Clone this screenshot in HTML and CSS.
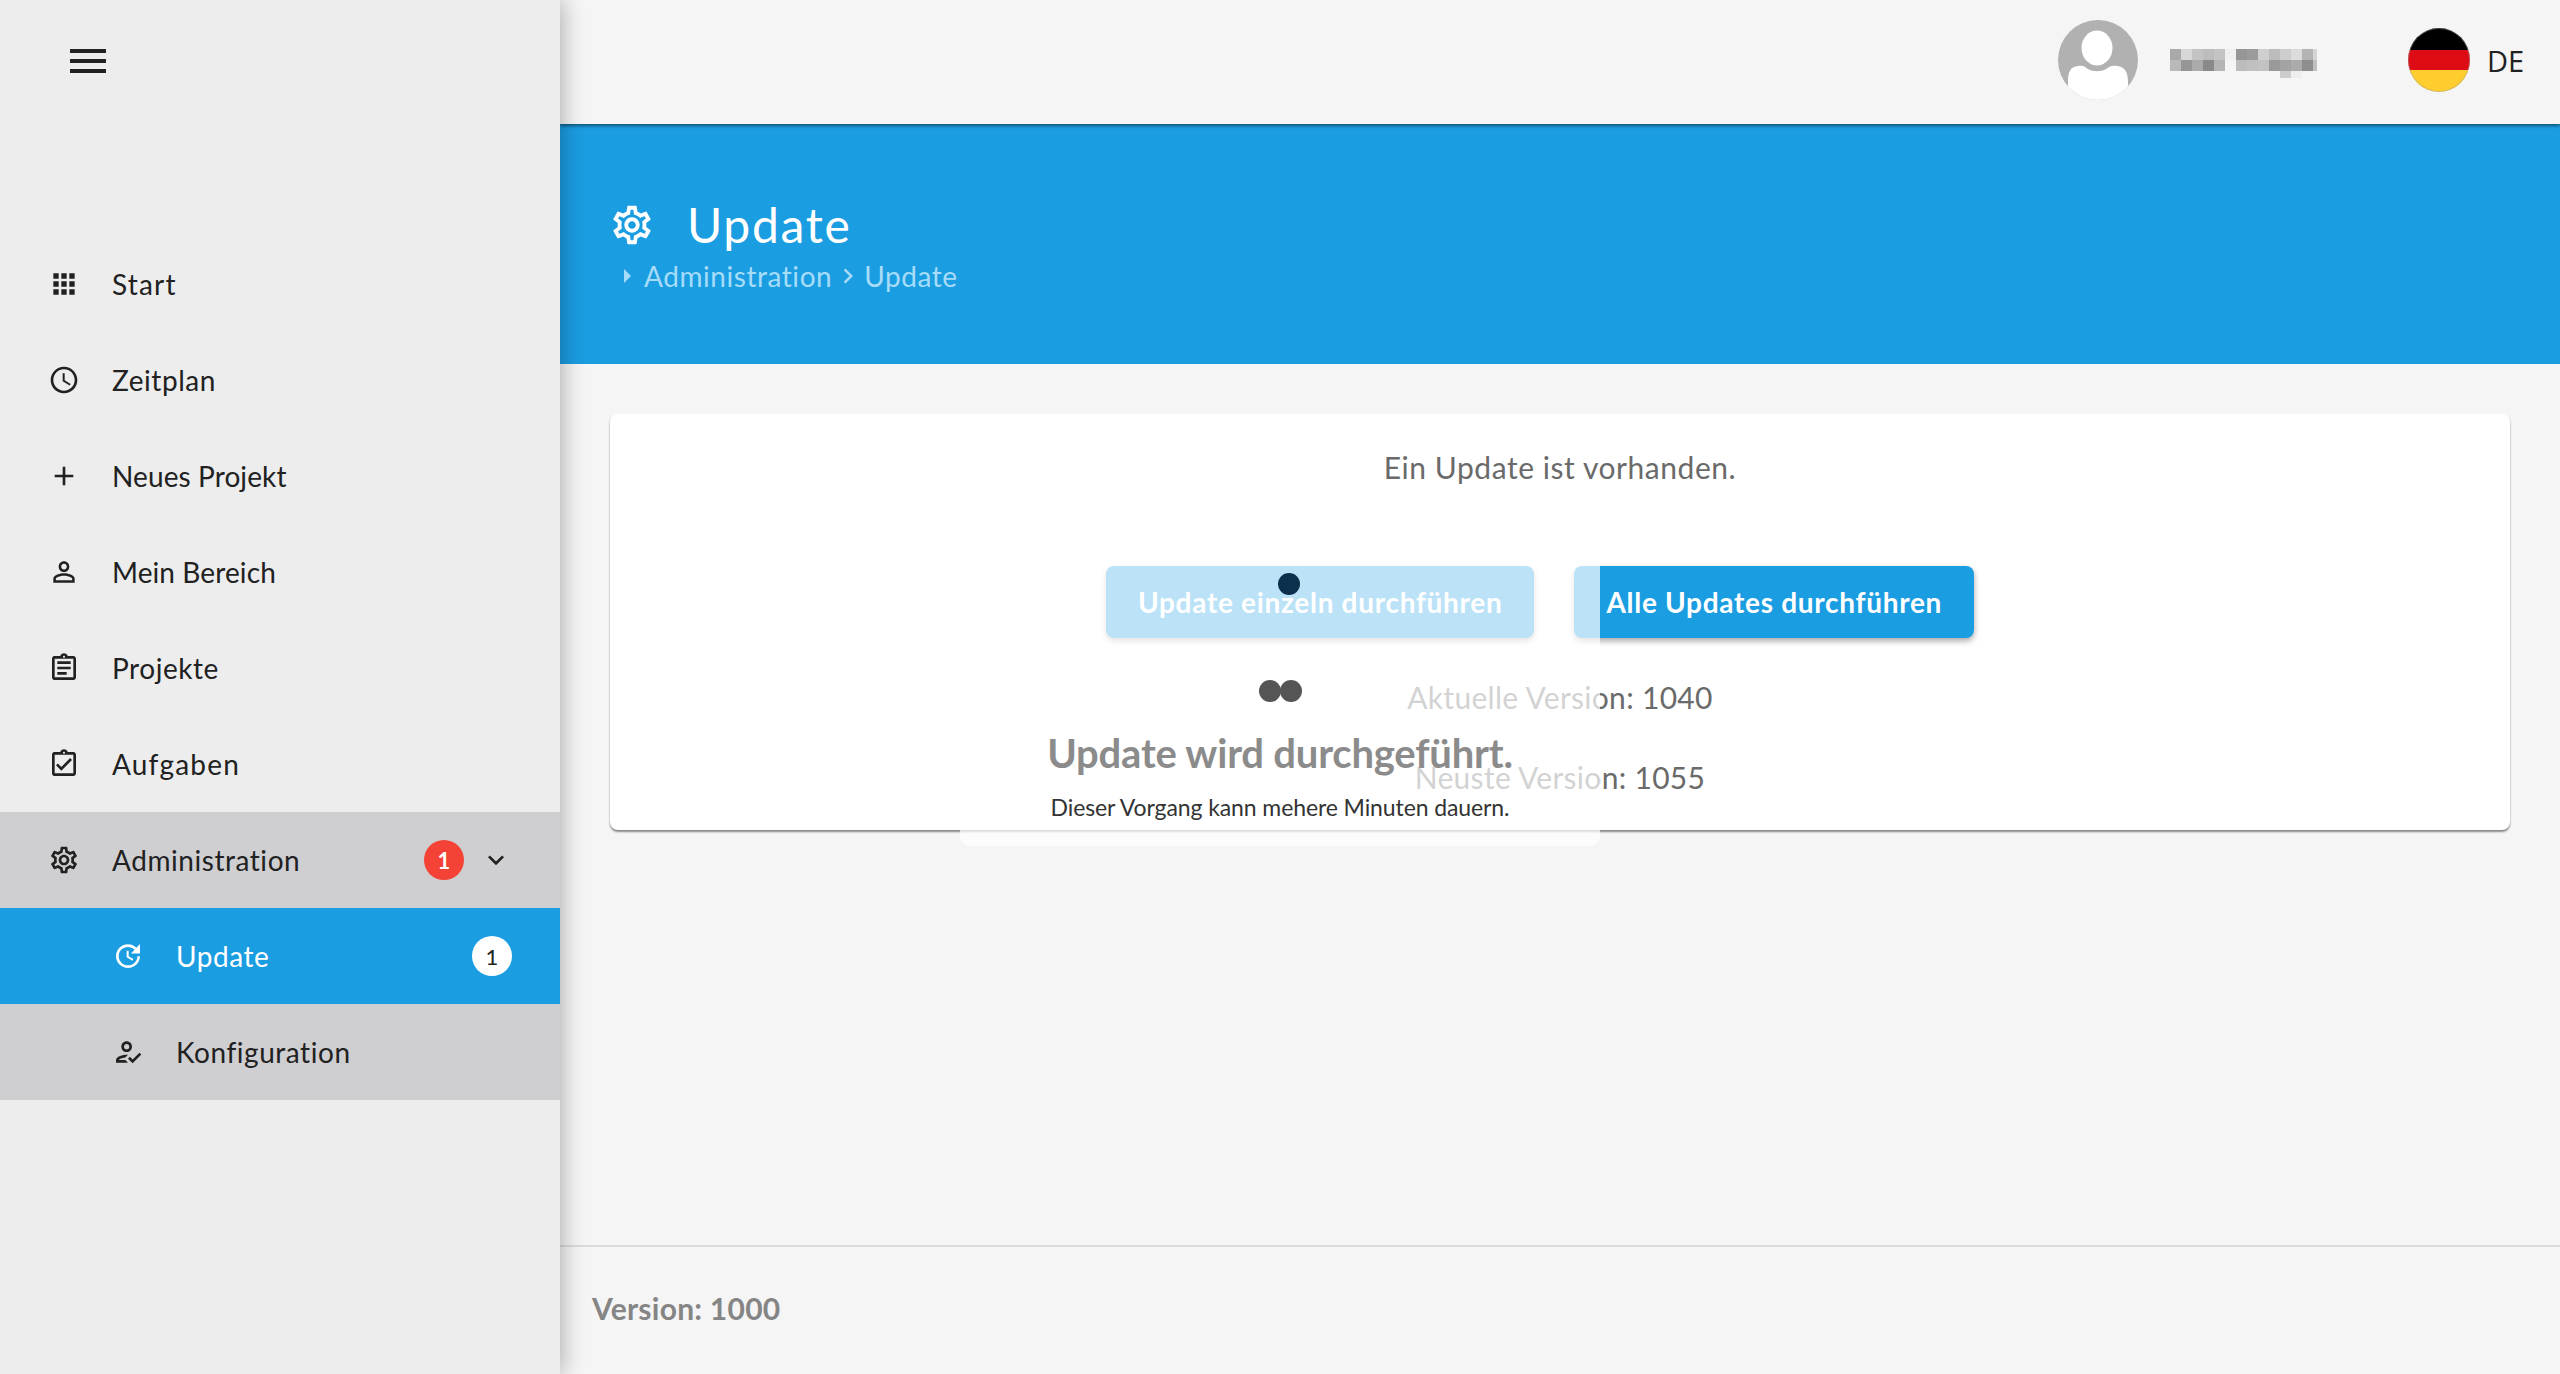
FILE: index.html
```html
<!DOCTYPE html>
<html lang="de">
<head>
<meta charset="utf-8">
<title>Update</title>
<link rel="stylesheet" href="styles.css">
</head>
<body>
<aside class="sidebar">
  <div class="brand">
    <svg class="menu-icon" viewBox="0 0 24 24"><path d="M3 18h18v-2H3v2zm0-5h18v-2H3v2zm0-7v2h18V6H3z"/></svg>
  </div>
  <nav class="nav">
    <a class="nav-item"><svg class="nav-icon" viewBox="0 0 24 24"><path d="M4 8h4V4H4v4zm6 12h4v-4h-4v4zm-6 0h4v-4H4v4zm0-6h4v-4H4v4zm6 0h4v-4h-4v4zm6-10v4h4V4h-4zm-6 4h4V4h-4v4zm6 6h4v-4h-4v4zm0 6h4v-4h-4v4z"/></svg><span class="nav-label track-wide">Start</span></a>
    <a class="nav-item"><svg class="nav-icon" viewBox="0 0 24 24"><path d="M11.99 2C6.47 2 2 6.48 2 12s4.47 10 9.99 10C17.52 22 22 17.52 22 12S17.52 2 11.99 2zM12 20c-4.42 0-8-3.58-8-8s3.58-8 8-8 8 3.58 8 8-3.58 8-8 8zm.5-13H11v6l5.25 3.15.75-1.23-4.5-2.67z"/></svg><span class="nav-label">Zeitplan</span></a>
    <a class="nav-item"><svg class="nav-icon" viewBox="0 0 24 24"><path d="M19 13h-6v6h-2v-6H5v-2h6V5h2v6h6v2z"/></svg><span class="nav-label track-tight">Neues Projekt</span></a>
    <a class="nav-item"><svg class="nav-icon" viewBox="0 0 24 24"><path d="M12 5.9c1.16 0 2.1.94 2.1 2.1s-.94 2.1-2.1 2.1S9.9 9.16 9.9 8s.94-2.1 2.1-2.1m0 9c2.97 0 6.1 1.46 6.1 2.1v1.1H5.9V17c0-.64 3.13-2.1 6.1-2.1M12 4C9.79 4 8 5.79 8 8s1.79 4 4 4 4-1.79 4-4-1.79-4-4-4zm0 9c-2.67 0-8 1.34-8 4v3h16v-3c0-2.66-5.33-4-8-4z"/></svg><span class="nav-label track-tight">Mein Bereich</span></a>
    <a class="nav-item"><svg class="nav-icon" viewBox="0 0 24 24"><path d="M7 15h7v2H7zm0-4h10v2H7zm0-4h10v2H7zm12-4h-4.18C14.4 1.84 13.3 1 12 1c-1.3 0-2.4.84-2.82 2H5c-.14 0-.27.01-.4.04-.39.08-.74.28-1.01.55-.18.18-.33.4-.43.64-.1.23-.16.49-.16.77v14c0 .27.06.54.16.78s.25.45.43.64c.27.27.62.47 1.01.55.13.02.26.03.4.03h14c1.1 0 2-.9 2-2V5c0-1.1-.9-2-2-2zm-7-.25c.41 0 .75.34.75.75s-.34.75-.75.75-.75-.34-.75-.75.34-.75.75-.75zM19 19H5V5h14v14z"/></svg><span class="nav-label">Projekte</span></a>
    <a class="nav-item"><svg class="nav-icon" viewBox="0 0 24 24"><path d="M18 9l-1.41-1.42L10 14.17l-2.59-2.58L6 13l4 4zm1-6h-4.18C14.4 1.84 13.3 1 12 1c-1.3 0-2.4.84-2.82 2H5c-.14 0-.27.01-.4.04-.39.08-.74.28-1.01.55-.18.18-.33.4-.43.64-.1.23-.16.49-.16.77v14c0 .27.06.54.16.78s.25.45.43.64c.27.27.62.47 1.01.55.13.02.26.03.4.03h14c1.1 0 2-.9 2-2V5c0-1.1-.9-2-2-2zm-7-.25c.41 0 .75.34.75.75s-.34.75-.75.75-.75-.34-.75-.75.34-.75.75-.75zM19 19H5V5h14v14z"/></svg><span class="nav-label track-wide">Aufgaben</span></a>
    <div class="nav-group">
      <a class="nav-item"><svg class="nav-icon" viewBox="0 0 24 24"><path d="M19.43 12.98c.04-.32.07-.64.07-.98 0-.34-.03-.66-.07-.98l2.11-1.65c.19-.15.24-.42.12-.64l-2-3.46c-.09-.16-.26-.25-.44-.25-.06 0-.12.01-.17.03l-2.49 1c-.52-.4-1.08-.73-1.69-.98l-.38-2.65C14.46 2.18 14.25 2 14 2h-4c-.25 0-.46.18-.49.42l-.38 2.65c-.61.25-1.17.59-1.69.98l-2.49-1c-.06-.02-.12-.03-.18-.03-.17 0-.34.09-.43.25l-2 3.46c-.13.22-.07.49.12.64l2.11 1.65c-.04.32-.07.65-.07.98 0 .33.03.66.07.98l-2.11 1.65c-.19.15-.24.42-.12.64l2 3.46c.09.16.26.25.44.25.06 0 .12-.01.17-.03l2.49-1c.52.4 1.08.73 1.69.98l.38 2.65c.03.24.24.42.49.42h4c.25 0 .46-.18.49-.42l.38-2.65c.61-.25 1.17-.59 1.69-.98l2.49 1c.06.02.12.03.18.03.17 0 .34-.09.43-.25l2-3.46c.12-.22.07-.49-.12-.64l-2.11-1.65zm-1.98-1.71c.04.31.05.52.05.73 0 .21-.02.43-.05.73l-.14 1.13.89.7 1.08.84-.7 1.21-1.27-.51-1.04-.42-.9.68c-.43.32-.84.56-1.25.73l-1.06.43-.16 1.13-.2 1.35h-1.4l-.19-1.35-.16-1.13-1.06-.43c-.43-.18-.83-.41-1.23-.71l-.91-.7-1.06.43-1.27.51-.7-1.21 1.08-.84.89-.7-.14-1.13c-.03-.31-.05-.54-.05-.74s.02-.43.05-.73l.14-1.13-.89-.7-1.08-.84.7-1.21 1.27.51 1.04.42.9-.68c.43-.32.84-.56 1.25-.73l1.06-.43.16-1.13.2-1.35h1.39l.19 1.35.16 1.13 1.06.43c.43.18.83.41 1.23.71l.91.7 1.06-.43 1.27-.51.7 1.21-1.07.85-.89.7.14 1.13zM12 8c-2.21 0-4 1.79-4 4s1.79 4 4 4 4-1.79 4-4-1.79-4-4-4zm0 6c-1.1 0-2-.9-2-2s.9-2 2-2 2 .9 2 2-.9 2-2 2z"/></svg><span class="nav-label">Administration</span><span class="badge badge-red">1</span><svg class="chevron" viewBox="0 0 24 24"><path d="M16.59 8.59L12 13.17 7.41 8.59 6 10l6 6 6-6z"/></svg></a>
      <a class="nav-item sub active"><svg class="nav-icon" viewBox="0 0 24 24"><path d="M21 10.12h-6.78l2.74-2.82c-2.73-2.7-7.15-2.8-9.88-.1-2.73 2.71-2.73 7.08 0 9.79s7.15 2.71 9.88 0C18.32 15.65 19 14.08 19 12.1h2c0 1.98-.88 4.55-2.64 6.29-3.51 3.48-9.21 3.48-12.72 0-3.5-3.47-3.53-9.11-.02-12.58s9.14-3.47 12.65 0L21 3v7.12zM12.5 8v4.25l3.5 2.08-.72 1.21L11 13V8h1.5z"/></svg><span class="nav-label">Update</span><span class="badge badge-white">1</span></a>
      <a class="nav-item sub"><svg class="nav-icon" viewBox="0 0 24 24"><path d="M11 12c2.21 0 4-1.79 4-4s-1.79-4-4-4-4 1.79-4 4 1.79 4 4 4zm0-6c1.1 0 2 .9 2 2s-.9 2-2 2-2-.9-2-2 .9-2 2-2zM5 18c.2-.63 2.57-1.68 4.96-1.94l2.04-2c-.39-.04-.68-.06-1-.06-2.67 0-8 1.34-8 4v2h9l-2-2H5zm15.6-5.5l-5.13 5.17-2.07-2.08L12 17l3.47 3.5L22 13.91z"/></svg><span class="nav-label">Konfiguration</span></a>
    </div>
  </nav>
</aside>

<div class="main">
  <header class="topbar">
    <svg class="avatar" viewBox="0 0 80 80">
      <defs><clipPath id="avatar-clip"><circle cx="40" cy="40" r="40"/></clipPath></defs>
      <circle cx="40" cy="40" r="40" fill="#b1b1b1"/>
      <g clip-path="url(#avatar-clip)" fill="#fff">
        <ellipse cx="39" cy="28" rx="15.5" ry="17.5"/>
        <path d="M10 62C10 52 12 47 20 46c5-1 6 0 10 3 5 3 13 3 18 0 4-3 6-4 11-3 8 1 11 6 11 16v18H10z"/>
      </g>
    </svg>
    <svg class="user-name" viewBox="0 0 147 29" shape-rendering="crispEdges" role="img" aria-label="Name verpixelt">
      <rect x="0" y="0" width="11" height="11" fill="#a9a9a9"/><rect x="11" y="0" width="11" height="11" fill="#d7d7d7"/><rect x="22" y="0" width="11" height="11" fill="#c4c4c4"/><rect x="33" y="0" width="11" height="11" fill="#bdbdbd"/><rect x="44" y="0" width="11" height="11" fill="#c4c4c4"/><rect x="55" y="0" width="11" height="11" fill="#f0f0f0"/><rect x="66" y="0" width="11" height="11" fill="#969696"/><rect x="77" y="0" width="11" height="11" fill="#9b9b9b"/><rect x="88" y="0" width="11" height="11" fill="#cfcfcf"/><rect x="99" y="0" width="11" height="11" fill="#bcbcbc"/><rect x="110" y="0" width="11" height="11" fill="#cdcdcd"/><rect x="121" y="0" width="11" height="11" fill="#dcdcdc"/><rect x="132" y="0" width="11" height="11" fill="#b4b4b4"/><rect x="143" y="0" width="4" height="11" fill="#d5d5d5"/>
      <rect x="0" y="11" width="11" height="11" fill="#b9b9b9"/><rect x="11" y="11" width="11" height="11" fill="#969696"/><rect x="22" y="11" width="11" height="11" fill="#ababab"/><rect x="33" y="11" width="11" height="11" fill="#8a8a8a"/><rect x="44" y="11" width="11" height="11" fill="#b5b5b5"/><rect x="66" y="11" width="11" height="11" fill="#bcbcbc"/><rect x="77" y="11" width="11" height="11" fill="#c0c0c0"/><rect x="88" y="11" width="11" height="11" fill="#c2c2c2"/><rect x="99" y="11" width="11" height="11" fill="#9a9a9a"/><rect x="110" y="11" width="11" height="11" fill="#a3a3a3"/><rect x="121" y="11" width="11" height="11" fill="#ababab"/><rect x="132" y="11" width="11" height="11" fill="#8e8e8e"/><rect x="143" y="11" width="4" height="11" fill="#c0c0c0"/>
      <rect x="110" y="22" width="11" height="7" fill="#ccc"/><rect x="121" y="22" width="11" height="7" fill="#eee"/>
    </svg>
    <svg class="flag" viewBox="0 0 62 64">
      <defs><clipPath id="flag-clip"><ellipse cx="31" cy="32" rx="31" ry="32"/></clipPath></defs>
      <g clip-path="url(#flag-clip)">
        <rect width="62" height="22" fill="#000"/>
        <rect y="22" width="62" height="20" fill="#dd0c14"/>
        <rect y="42" width="62" height="22" fill="#ffce2e"/>
      </g>
      <ellipse cx="31" cy="32" rx="30.5" ry="31.5" fill="none" stroke="#999" stroke-opacity=".45"/>
    </svg>
    <span class="lang">DE</span>
  </header>

  <section class="page-head">
    <div class="page-title-row">
      <svg class="page-icon" viewBox="0 0 24 24"><path d="M19.43 12.98c.04-.32.07-.64.07-.98 0-.34-.03-.66-.07-.98l2.11-1.65c.19-.15.24-.42.12-.64l-2-3.46c-.09-.16-.26-.25-.44-.25-.06 0-.12.01-.17.03l-2.49 1c-.52-.4-1.08-.73-1.69-.98l-.38-2.65C14.46 2.18 14.25 2 14 2h-4c-.25 0-.46.18-.49.42l-.38 2.65c-.61.25-1.17.59-1.69.98l-2.49-1c-.06-.02-.12-.03-.18-.03-.17 0-.34.09-.43.25l-2 3.46c-.13.22-.07.49.12.64l2.11 1.65c-.04.32-.07.65-.07.98 0 .33.03.66.07.98l-2.11 1.65c-.19.15-.24.42-.12.64l2 3.46c.09.16.26.25.44.25.06 0 .12-.01.17-.03l2.49-1c.52.4 1.08.73 1.69.98l.38 2.65c.03.24.24.42.49.42h4c.25 0 .46-.18.49-.42l.38-2.65c.61-.25 1.17-.59 1.69-.98l2.49 1c.06.02.12.03.18.03.17 0 .34-.09.43-.25l2-3.46c.12-.22.07-.49-.12-.64l-2.11-1.65zm-1.98-1.71c.04.31.05.52.05.73 0 .21-.02.43-.05.73l-.14 1.13.89.7 1.08.84-.7 1.21-1.27-.51-1.04-.42-.9.68c-.43.32-.84.56-1.25.73l-1.06.43-.16 1.13-.2 1.35h-1.4l-.19-1.35-.16-1.13-1.06-.43c-.43-.18-.83-.41-1.23-.71l-.91-.7-1.06.43-1.27.51-.7-1.21 1.08-.84.89-.7-.14-1.13c-.03-.31-.05-.54-.05-.74s.02-.43.05-.73l.14-1.13-.89-.7-1.08-.84.7-1.21 1.27.51 1.04.42.9-.68c.43-.32.84-.56 1.25-.73l1.06-.43.16-1.13.2-1.35h1.39l.19 1.35.16 1.13 1.06.43c.43.18.83.41 1.23.71l.91.7 1.06-.43 1.27-.51.7 1.21-1.07.85-.89.7.14 1.13zM12 8c-2.21 0-4 1.79-4 4s1.79 4 4 4 4-1.79 4-4-1.79-4-4-4zm0 6c-1.1 0-2-.9-2-2s.9-2 2-2 2 .9 2 2-.9 2-2 2z"/></svg>
      <h1 class="page-title">Update</h1>
    </div>
    <div class="crumbs">
      <svg class="crumb-caret" viewBox="0 0 8 14"><path d="M1 0l7 7-7 7z"/></svg>
      <span>Administration</span>
      <svg class="crumb-sep" viewBox="0 0 24 24"><path d="M10 6L8.59 7.41 13.17 12l-4.58 4.59L10 18l6-6z"/></svg>
      <span>Update</span>
    </div>
  </section>

  <section class="content">
    <div class="card">
      <p class="card-note">Ein Update ist vorhanden.</p>
      <div class="actions">
        <button class="btn">Update einzeln durchführen</button>
        <button class="btn">Alle Updates durchführen</button>
      </div>
      <p class="version-line">Aktuelle Version: 1040</p>
      <p class="version-line">Neuste Version: 1055</p>
    </div>
  </section>

  <footer class="footer">Version: 1000</footer>
</div>

<div class="progress-modal">
  <span class="dot dot-blue"></span>
  <span class="dot dot-gray dot-a"></span>
  <span class="dot dot-gray dot-b"></span>
  <h2 class="progress-title">Update wird durchgeführt.</h2>
  <p class="progress-text">Dieser Vorgang kann mehere Minuten dauern.</p>
</div>
</body>
</html>
```

FILE: styles.css
```css
* { box-sizing: border-box; }
html, body { height: 100%; }
body {
  margin: 0;
  height: 1374px;
  overflow: hidden;
  display: flex;
  position: relative;
  background: #f5f5f5;
  color: #212121;
  font-family: Lato, "Noto Sans", sans-serif;
  font-size: 28px;
}
p, h1, h2 { margin: 0; font-weight: 400; }

/* Sidebar */
.sidebar {
  width: 560px;
  flex: none;
  background: #ededee;
  box-shadow: 2px 0 22px rgba(0, 0, 0, .3);
  position: relative;
  z-index: 3;
}
.brand { height: 236px; padding: 37px 0 0 64px; }
.menu-icon { width: 48px; height: 48px; display: block; fill: #212121; }
.nav { display: flex; flex-direction: column; }
.nav-group { background: #cfcfd1; }
.nav-item {
  height: 96px;
  display: flex;
  align-items: center;
  padding-left: 48px;
  color: #212121;
}
.nav-item.sub { padding-left: 112px; }
.nav-item.active { background: #1b9de2; color: #fff; }
.nav-icon { width: 32px; height: 32px; flex: none; fill: currentColor; }
.nav-label { margin-left: 32px; letter-spacing: .55px; }
.nav-label.track-wide { letter-spacing: 1.2px; }
.nav-label.track-tight { letter-spacing: .1px; }
.badge {
  position: absolute;
  width: 40px;
  height: 40px;
  border-radius: 50%;
  display: flex;
  align-items: center;
  justify-content: center;
  font-size: 22px;
  font-weight: 700;
}
.badge-red { left: 424px; background: #f44336; color: #fff; }
.badge-white { left: 472px; background: #fff; color: #212121; font-weight: 400; }
.chevron { position: absolute; left: 480px; width: 32px; height: 32px; fill: #212121; }

/* Main */
.main { flex: 1; min-width: 0; display: flex; flex-direction: column; }
.topbar {
  height: 124px;
  flex: none;
  display: flex;
  align-items: center;
  position: relative;
  z-index: 2;
  background: #f5f5f5;
  box-shadow: 0 2px 3px rgba(0, 0, 0, .45);
  padding: 0 0 4px 1498px;
}
.avatar { width: 80px; height: 80px; flex: none; }
.user-name { width: 147px; height: 29px; flex: none; margin: 7px 0 0 32px; }
.flag { width: 62px; height: 64px; flex: none; margin-left: 91px; }
.lang { margin-left: 17px; font-family: "Open Sans", sans-serif; font-size: 29px; }

.page-head {
  height: 240px;
  flex: none;
  background: #1b9de2;
  color: #fff;
  padding: 74px 0 0 50px;
}
.page-title-row { display: flex; align-items: center; height: 54px; }
.page-icon { width: 46px; height: 46px; fill: #fff; flex: none; margin-left: -1px; }
.page-title { margin-left: 32px; font-size: 48px; line-height: 54px; letter-spacing: 1.7px; }
.crumbs {
  display: flex;
  align-items: center;
  height: 40px;
  margin-top: 4px;
  padding-left: 13px;
  color: #a6dcf8;
  letter-spacing: .55px;
}
.crumb-caret { width: 8px; height: 14px; fill: #a6dcf8; margin-right: 13px; }
.crumb-sep { width: 30px; height: 30px; flex: none; fill: #a6dcf8; margin: 0 1px; }

.content { flex: 1; padding: 50px; }
.card {
  background: #fff;
  border-radius: 8px;
  box-shadow: 0 2px 2px rgba(0, 0, 0, .45);
  height: 416px;
  text-align: center;
  color: #6a6a6a;
  padding-top: 32px;
  font-size: 30px;
}
.card-note { line-height: 42px; letter-spacing: .55px; }
.actions { display: flex; justify-content: center; margin-top: 78px; }
.btn {
  height: 72px;
  padding: 0 32px;
  margin-right: 40px;
  border: 0;
  border-radius: 8px;
  background: #1b9de2;
  color: #fff;
  font: 700 28px Lato, sans-serif;
  letter-spacing: .7px;
  box-shadow: 0 3px 6px rgba(0, 0, 0, .35);
}
.version-line { line-height: 40px; letter-spacing: .3px; }
.actions + .version-line { margin-top: 39px; }
.version-line + .version-line { margin-top: 40px; }

.footer {
  height: 129px;
  flex: none;
  border-top: 2px solid #dcdcdc;
  padding: 43px 0 0 32px;
  color: #858585;
  font-size: 30px;
  font-weight: 700;
  letter-spacing: .25px;
}

/* Fading progress modal that lies over the card */
.progress-modal {
  position: absolute;
  left: 960px;
  top: 528px;
  width: 640px;
  height: 318px;
  z-index: 1;
  background: rgba(255, 255, 255, .7);
  border-radius: 10px;
  text-align: center;
}
.dot { position: absolute; width: 22px; height: 22px; border-radius: 50%; filter: blur(.6px); }
.dot-blue { left: 318px; top: 45px; background: #0b2f4c; }
.dot-gray { top: 152px; background: #555; }
.dot-a { left: 299px; }
.dot-b { left: 320px; }
.progress-title {
  margin-top: 203px;
  font-size: 40px;
  line-height: 44px;
  font-weight: 700;
  letter-spacing: -.2px;
  color: #8b8b8b;
}
.progress-text { margin-top: 16px; font-size: 23px; line-height: 32px; letter-spacing: -.1px; color: #333; }
```
